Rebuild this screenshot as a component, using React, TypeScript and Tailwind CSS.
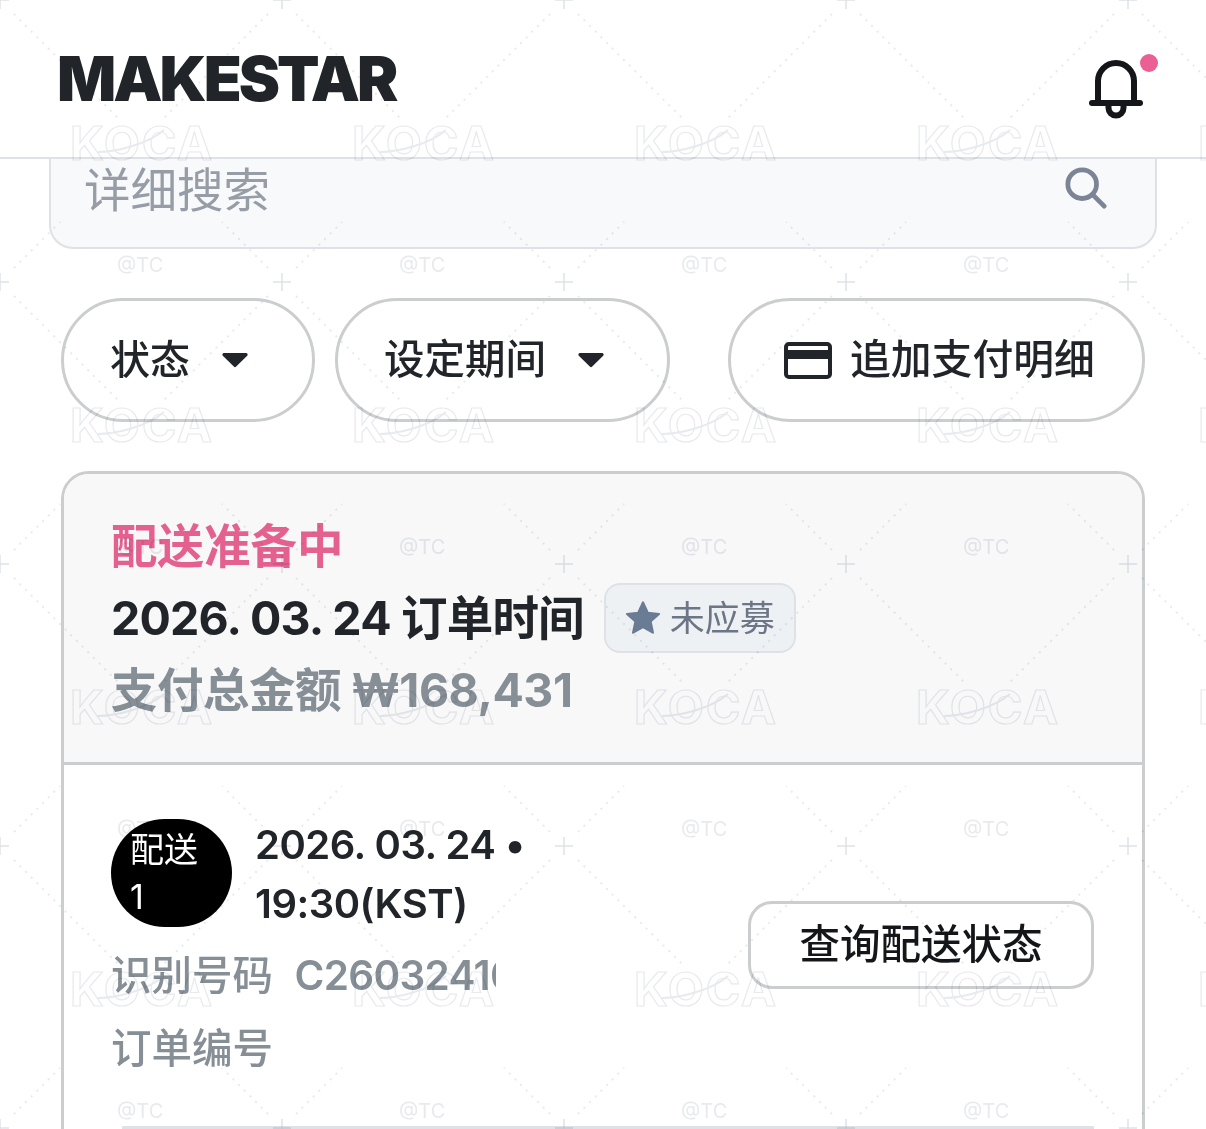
const FONT = "font-['Inter','Noto_Sans_CJK_SC',sans-serif]";

const COLS = [0, 1, 2, 3, 4];
const ROWS = [0, 1, 2, 3, 4];

// repeated KOCA / @TC stamp that sits over the whole screenshot
function Watermark() {
  return (
    <svg className="absolute inset-0 pointer-events-none mix-blend-multiply" width="1206" height="1129" viewBox="0 0 1206 1129">
      {ROWS.map((r) =>
        COLS.map((c) => (
          <g key={`${r}-${c}`} transform={`translate(${c * 282} ${r * 282})`}>
            <path d="M-9 0H9M0-9V9" stroke="#dfe3e8" strokeWidth="1.5" />
            <path
              d="M14 14L118 118M268 14L164 118M14 268L60 222M268 268L222 222"
              stroke="#e8ebee"
              strokeWidth="2"
              strokeDasharray="2 6"
            />
            <text
              x="70"
              y="160"
              textLength="142"
              fontFamily="Inter, sans-serif"
              fontSize="47"
              fontWeight="700"
              fill="none"
              stroke="#e8eaee"
              strokeWidth="1.2"
            >
              KOCA
            </text>
            <path d="M98 152C116 152 148 144 164 130" fill="none" stroke="#e8eaee" strokeWidth="2" />
            <text x="117" y="272" fontFamily="Inter, sans-serif" fontSize="20" fill="#e8eaee">
              @TC
            </text>
          </g>
        ))
      )}
    </svg>
  );
}

function Bell() {
  return (
    <div className="relative w-[60px] h-[66px]">
      <svg width="60" height="66" viewBox="0 0 60 66" fill="none" stroke="#14161a" strokeWidth="6" strokeLinecap="round">
        <path d="M10 47V25a18 18 0 0 1 36 0V47" />
        <path d="M4 47H52" />
        <path d="M20.500 48v4a7.500 7.500 0 0 0 15 0v-4" />
      </svg>
      <span className="absolute left-[52px] top-[-2px] w-[18px] h-[18px] rounded-full bg-[#ea5f94]" />
    </div>
  );
}

function Caret() {
  return (
    <svg width="28" height="16" viewBox="0 0 28 16" className="shrink-0">
      <path d="M3 1H25a1.6 1.6 0 0 1 1.2 2.7L15.2 14.6a1.7 1.7 0 0 1-2.4 0L1.8 3.7A1.6 1.6 0 0 1 3 1Z" fill="#212529" />
    </svg>
  );
}

function CardIcon() {
  return (
    <svg width="48" height="37" viewBox="0 0 48 37" className="shrink-0">
      <rect x="2" y="2" width="44" height="33" rx="3" fill="none" stroke="#212529" strokeWidth="4" />
      <rect x="2" y="8" width="44" height="9" fill="#212529" />
    </svg>
  );
}

export default function App() {
  return (
    <div className={`relative w-[1206px] h-[1129px] overflow-hidden bg-white ${FONT}`}>
      <header className="h-[159px] border-b-2 border-[#dee2e6] flex items-start justify-between pl-[57px] pr-[58px]">
        <span className="mt-[40px] text-[62px] leading-[78px] font-black tracking-[-3px] text-[#212529] font-['Inter',sans-serif]">
          MAKESTAR
        </span>
        <div className="mt-[56px]">
          <Bell />
        </div>
      </header>

      <div className="mx-[49px] h-[90px] flex items-center justify-between pl-[33px] pr-[48px] bg-[#f8f9fa] border-2 border-t-0 border-[#dee2e6] rounded-b-[24px]">
        <span className="text-[46.5px] leading-[60px] text-[#969da6] mb-[26px]">详细搜索</span>
        <svg width="42" height="42" viewBox="0 0 44 44" fill="none" stroke="#7c8595" strokeWidth="5" strokeLinecap="round" className="mb-[30px]">
          <circle cx="18" cy="18" r="15" />
          <path d="M29 29L41 41" />
        </svg>
      </div>

      <div className="mx-[61px] mt-[49px] flex gap-[20px] text-[#212529]">
        <button className="w-[254px] h-[124px] flex items-center gap-[31px] pl-[46px] rounded-full border-[3px] border-[#cbcdcf] text-[40px] font-medium">
          <span>状态</span>
          <Caret />
        </button>
        <button className="w-[335px] h-[124px] flex items-center gap-[31px] pl-[46px] rounded-full border-[3px] border-[#cbcdcf] text-[40.5px] font-medium">
          <span>设定期间</span>
          <Caret />
        </button>
        <button className="ml-auto w-[417px] h-[124px] flex items-center gap-[18px] pl-[53px] rounded-full border-[3px] border-[#cbcdcf] text-[40.8px] font-medium">
          <CardIcon />
          <span>追加支付明细</span>
        </button>
      </div>

      <section className="mx-[61px] mt-[49px] h-[800px] border-[3px] border-[#cbcdcf] rounded-[28px] overflow-hidden">
        <div className="h-[291px] pt-[36px] pl-[47px] bg-[#f8f8f9] border-b-[3px] border-[#cbcdcf] font-bold text-[46.5px] leading-[72px]">
          <div className="text-[#e4608f]">配送准备中</div>
          <div className="flex items-center text-[#212529]">
            <span className="tracking-[-0.8px]">2026. 03. 24 订单时间</span>
            <span className="ml-[20px] h-[70px] w-[192px] flex items-center justify-center gap-[9px] rounded-[16px] bg-[#eef1f4] border-2 border-[#dee2e6] text-[35px] leading-[44px] font-normal text-[#6c7686]">
              <svg width="36" height="34" viewBox="0 0 24 23" className="shrink-0">
                <path
                  d="M12 1l3.2 7 7.6.8-5.700 5.100 1.600 7.500L12 17.600l-6.700 3.800 1.600-7.500L1.200 8.800 8.800 8z"
                  fill="#6a7b94"
                  stroke="#6a7b94"
                  strokeWidth="1.5"
                  strokeLinejoin="round"
                />
              </svg>
              未应募
            </span>
          </div>
          <div className="text-[#868e96] tracking-[-0.5px]">支付总金额 ₩168,431</div>
        </div>

        <div className="pl-[47px] pr-[48px] pt-[50px]">
          <div className="flex items-center justify-between">
            <div className="w-[385px]">
              <div className="flex gap-[23px]">
                <div className="w-[121px] h-[108px] mt-[4px] shrink-0 rounded-full bg-black text-white text-[34px] leading-[47px] pl-[19px] pt-[7px]">
                  配送
                  <br />1
                </div>
                <div className="whitespace-nowrap tracking-[-0.5px] text-[40px] leading-[59px] font-semibold text-[#212529]">
                  2026. 03. 24 •
                  <br />
                  19:30(KST)
                </div>
              </div>
              <div className="mt-[6px] text-[40.5px] leading-[73px] font-medium text-[#868e96]">
                <div className="overflow-hidden whitespace-nowrap">
                  识别号码&nbsp; <span className="font-semibold tracking-[-0.7px]">C2603241000</span>
                </div>
                <div>订单编号</div>
              </div>
            </div>
            <button className="w-[346px] h-[88px] mb-[10px] rounded-[24px] border-[3px] border-[#cbcdcf] text-[40.5px] font-medium text-[#14161a]">
              查询配送状态
            </button>
          </div>
          <div className="mt-[41px] ml-[11px] h-[3px] bg-[#dee2e6]" />
        </div>
      </section>

      <Watermark />
    </div>
  );
}
